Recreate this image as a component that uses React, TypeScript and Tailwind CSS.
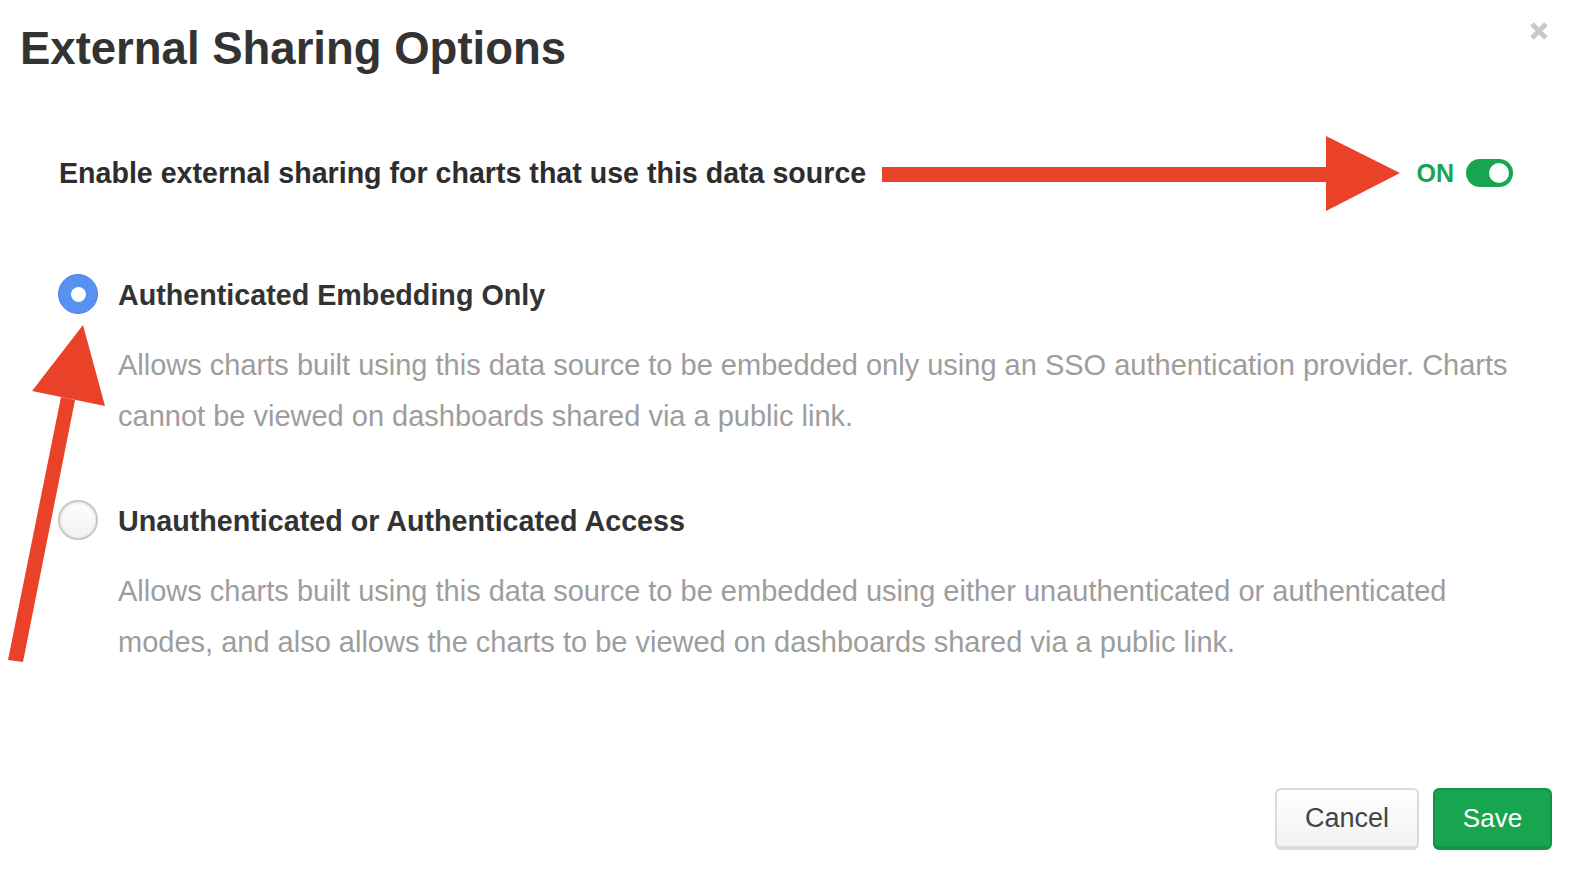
import React from "react";

function Radio({ checked }: { checked: boolean }) {
  if (checked) {
    return (
      <div className="w-[40px] h-[40px] shrink-0 rounded-full bg-[#5892f0] border border-[#4a83e3] flex items-center justify-center">
        <div className="w-[15px] h-[15px] rounded-full bg-white" />
      </div>
    );
  }
  return (
    <div className="w-[40px] h-[40px] shrink-0 rounded-full border-2 border-[#c6c8c8] bg-gradient-to-b from-[#ffffff] to-[#f1f1f1] shadow-[inset_0_1px_3px_rgba(0,0,0,0.12)]" />
  );
}

function Option({
  checked,
  label,
  desc,
}: {
  checked: boolean;
  label: string;
  desc: string;
}) {
  return (
    <div className="pl-[58px]">
      <div className="flex items-start gap-[20px]">
        <Radio checked={checked} />
        <div className="text-[28.7px] leading-[40px] font-bold text-[#333333] pt-[1px]">
          {label}
        </div>
      </div>
      <p className="ml-[60px] mt-[25px] w-[1410px] text-[29px] leading-[51px] text-[#9d9d9d]">
        {desc}
      </p>
    </div>
  );
}

export default function App() {
  return (
    <div className="relative w-[1570px] h-[874px] bg-white overflow-hidden font-['Liberation_Sans',Arial,sans-serif]">
      <div className="flex items-start justify-between pl-[20px] pr-[21px] pt-[21px]">
        <h1 className="mt-[5px] text-[45.5px] leading-[45px] font-bold text-[#333333]">
          External Sharing Options
        </h1>
        <button className="w-[20px] h-[20px]" aria-label="Close">
          <svg viewBox="0 0 20 20" width="20" height="20">
            <path d="M3 3 L17 17 M17 3 L3 17" stroke="#c9c9c9" strokeWidth="5" strokeLinecap="butt" />
          </svg>
        </button>
      </div>

      <div className="mt-[87px] pl-[59px] pr-[57px] flex items-center justify-between h-[30px]">
        <div className="text-[28.6px] leading-[30px] font-bold text-[#2d2d2d]">
          Enable external sharing for charts that use this data source
        </div>
        <div className="flex items-center gap-[12px]">
          <span className="text-[25px] leading-[30px] font-bold text-[#18a54f]">ON</span>
          <div className="w-[47px] h-[28px] rounded-full bg-[#18a54f] flex items-center justify-end pr-[4px]">
            <div className="w-[20px] h-[20px] rounded-full bg-white" />
          </div>
        </div>
      </div>

      <div className="mt-[86px]">
        <Option
          checked
          label="Authenticated Embedding Only"
          desc="Allows charts built using this data source to be embedded only using an SSO authentication provider. Charts cannot be viewed on dashboards shared via a public link."
        />
      </div>
      <div className="mt-[58px]">
        <Option
          checked={false}
          label="Unauthenticated or Authenticated Access"
          desc="Allows charts built using this data source to be embedded using either unauthenticated or authenticated modes, and also allows the charts to be viewed on dashboards shared via a public link."
        />
      </div>

      <div className="mt-[120px] pr-[18px] flex justify-end gap-[14px]">
        <button className="w-[144px] h-[62px] rounded-[6px] border-2 border-b-4 border-[#d8dadc] bg-gradient-to-b from-[#ffffff] to-[#f1f2f3] text-[27px] text-[#444444]">
          Cancel
        </button>
        <button className="w-[119px] h-[62px] rounded-[6px] border-2 border-b-4 border-[#14914a] bg-[#18a550] text-[26px] text-white">
          Save
        </button>
      </div>

      <svg
        className="absolute left-0 top-0 pointer-events-none"
        width="1570"
        height="874"
        viewBox="0 0 1570 874"
      >
        <rect x="882" y="167" width="446" height="15" fill="#ea4129" />
        <polygon points="1326,136 1400,173 1326,211" fill="#ea4129" />
        <polygon points="61,397 75,400 23,662 8,660" fill="#ea4129" />
        <polygon points="83,325 32,391 105,406" fill="#ea4129" />
      </svg>
    </div>
  );
}
